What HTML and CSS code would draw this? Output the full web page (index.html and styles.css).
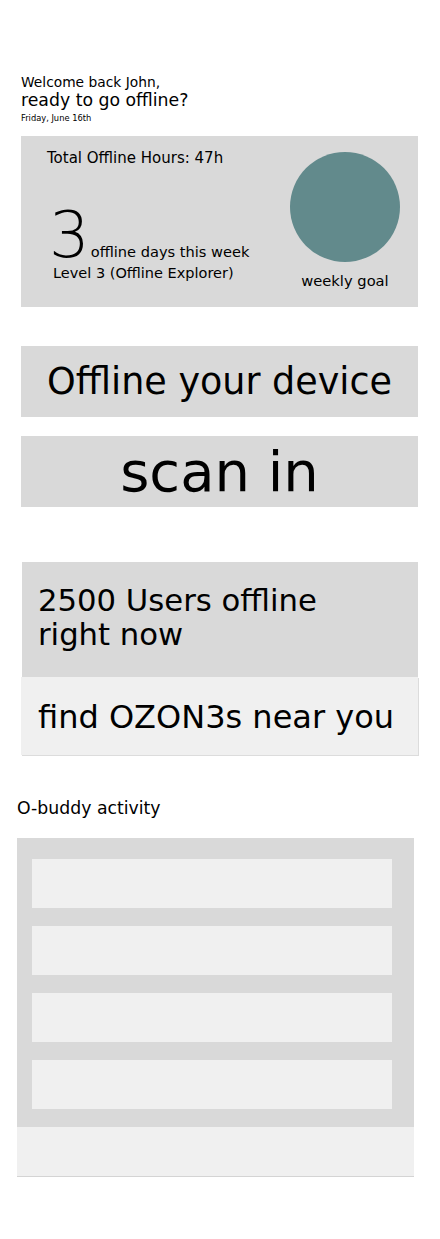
FILE: index.html
```html
<!DOCTYPE html>
<html lang="en">
<head>
<meta charset="utf-8">
<title>OZON3 home</title>
<link rel="stylesheet" href="styles.css">
</head>
<body>
<main class="page">
  <header class="greeting">
    <p class="greeting-hello">Welcome back John,</p>
    <h1 class="greeting-title">ready to go offline?</h1>
    <p class="greeting-date">Friday, June 16th</p>
  </header>

  <section class="stats-card">
    <div class="stats-main">
      <p class="stats-total">Total Offline Hours: 47h</p>
      <div class="stats-days">
        <span class="stats-days-num">3</span>
        <span class="stats-days-label">offline days this week</span>
      </div>
      <p class="stats-level">Level 3 (Offline Explorer)</p>
    </div>
    <div class="stats-goal">
      <div class="goal-circle"></div>
      <p class="goal-label">weekly goal</p>
    </div>
  </section>

  <button class="action action-offline">Offline your device</button>
  <button class="action action-scan">scan in</button>

  <section class="community">
    <p class="community-count">2500 Users offline right now</p>
    <p class="community-find">find OZON3s near you</p>
  </section>

  <h2 class="activity-title">O-buddy activity</h2>
  <section class="activity">
    <div class="activity-list">
      <div class="activity-row"></div>
      <div class="activity-row"></div>
      <div class="activity-row"></div>
      <div class="activity-row"></div>
    </div>
    <div class="activity-footer"></div>
  </section>
</main>
</body>
</html>
```

FILE: styles.css
```css
* { box-sizing: border-box; }
html, body { margin: 0; padding: 0; background: #fff; }
body {
  font-family: "DejaVu Sans", "Noto Sans", sans-serif;
  color: #000;
  width: 440px;
}
p, h1, h2 { margin: 0; font-weight: normal; }

.page { padding-top: 74px; padding-bottom: 60px; }

.greeting { margin-left: 21px; }
.greeting-hello { font-size: 13.8px; line-height: 17px; }
.greeting-title { font-size: 17.3px; line-height: 19px; }
.greeting-date { font-size: 8.3px; line-height: 14px; margin-top: 1px; }

.stats-card {
  margin: 11px 22px 0 21px;
  height: 171px;
  background: #d9d9d9;
  display: flex;
  justify-content: space-between;
}
.stats-main { padding: 12px 0 0 26px; display: flex; flex-direction: column; }
.stats-total { font-size: 15px; line-height: 20px; }
.stats-days { display: flex; align-items: baseline; margin-top: 44px; margin-left: 2px; }
.stats-days-num { font-size: 64px; line-height: 46px; font-weight: 300; }
.stats-days-label { font-size: 14.6px; line-height: 18px; margin-left: 1px; }
.stats-level { font-size: 14.5px; line-height: 20px; margin-left: 6px; margin-top: 2px; }

.stats-goal { padding: 16px 18px 0 0; display: flex; flex-direction: column; align-items: center; }
.goal-circle { width: 110px; height: 110px; border-radius: 50%; background: #628a8c; }
.goal-label { font-size: 14.7px; line-height: 20px; margin-top: 9px; }

.action {
  display: block;
  margin: 39px 22px 0 21px;
  width: 397px;
  height: 71px;
  border: 0;
  padding: 0;
  background: #d9d9d9;
  color: #000;
  font-family: inherit;
  text-align: center;
  cursor: pointer;
}
.action-offline { font-size: 36.5px; }
.action-scan { margin-top: 19px; font-size: 56px; }

.community { margin-top: 55px; }
.community-count {
  margin-left: 22px;
  width: 396px;
  height: 115px;
  background: #d9d9d9;
  padding: 22px 60px 0 16px;
  font-size: 30.7px;
  line-height: 34px;
}
.community-find {
  margin-left: 21px;
  width: 397px;
  height: 78px;
  background: #f0f0f0;
  box-shadow: 1px 1px 0 #dcdcdc;
  padding: 2px 0 0 17px;
  font-size: 32px;
  line-height: 76px;
  white-space: nowrap;
}

.activity-title { margin: 42px 0 0 17px; font-size: 17.3px; line-height: 22px; }
.activity { margin: 19px 0 0 17px; width: 397px; }
.activity-list {
  background: #d9d9d9;
  padding: 21px 22px 18px 15px;
  display: flex;
  flex-direction: column;
  gap: 18px;
}
.activity-row { height: 49px; background: #f0f0f0; }
.activity-footer { height: 50px; background: #f0f0f0; border-bottom: 1px solid #d4d4d4; }
```
